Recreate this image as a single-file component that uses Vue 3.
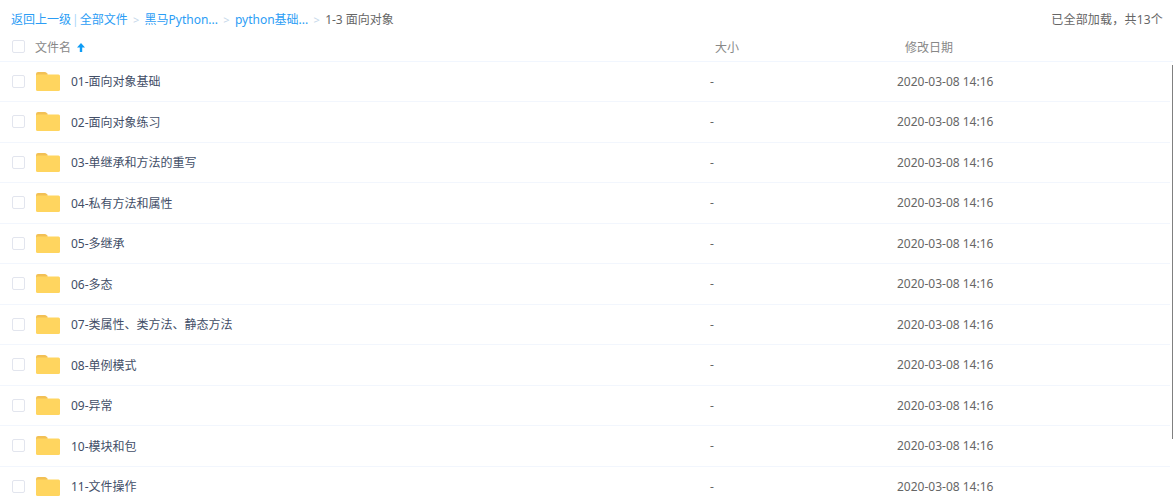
<script setup>
// 网盘文件列表：面包屑 + 表头 + 文件夹行
const names = [
  '01-面向对象基础',
  '02-面向对象练习',
  '03-单继承和方法的重写',
  '04-私有方法和属性',
  '05-多继承',
  '06-多态',
  '07-类属性、类方法、静态方法',
  '08-单例模式',
  '09-异常',
  '10-模块和包',
  '11-文件操作'
]
</script>

<template>
  <div class="page">
    <!-- 面包屑 -->
    <div class="crumbs">
      <div class="path">
        <a>返回上一级</a>
        <span class="bar">|</span>
        <a>全部文件</a>
        <span class="sep">&gt;</span>
        <a>黑马Python...</a>
        <span class="sep">&gt;</span>
        <a>python基础...</a>
        <span class="sep">&gt;</span>
        <span>1-3 面向对象</span>
      </div>
      <div class="total">已全部加载，共13个</div>
    </div>

    <!-- 表头 -->
    <div class="head">
      <span class="check"></span>
      <span class="head-name">文件名
        <svg class="arrow" width="8" height="9" viewBox="0 0 8 9">
          <path d="M4 0 L8 4.5 L5.2 4.5 L5.2 9 L2.8 9 L2.8 4.5 L0 4.5 Z" fill="#0e9cf5" />
        </svg>
      </span>
      <span class="head-size">大小</span>
      <span class="head-date">修改日期</span>
    </div>

    <!-- 文件行 -->
    <div class="row" v-for="n in names" :key="n">
      <span class="check"></span>
      <svg class="folder" width="24" height="19" viewBox="0 0 24 19">
        <path d="M0 2 Q0 0 2 0 L8.5 0 Q10 0 11 1.2 L12 2.5 L0 6 Z" fill="#f2c055" />
        <path d="M0 3.8 Q0 2.5 1.5 2.5 L22.5 2.5 Q24 2.5 24 4 L24 17.5 Q24 19 22.5 19 L1.5 19 Q0 19 0 17.5 Z" fill="#ffd55f" />
      </svg>
      <span class="name">{{ n }}</span>
      <span class="size">-</span>
      <span class="date">2020-03-08 14:16</span>
    </div>

    <!-- 滚动条 -->
    <div class="thumb"></div>
  </div>
</template>

<style>
html, body { background: #fff; overflow: hidden; }
</style>

<style scoped>
.page {
  position: relative;
  width: 1173px;
  height: 503px;
  overflow: hidden;
  font-family: "Noto Sans", "Noto Sans CJK SC", sans-serif;
  font-size: 12px;
  color: #666;
  background: #fff;
}
.crumbs {
  display: flex;
  justify-content: space-between;
  align-items: center;
  height: 38px;
  padding: 0 10px 0 11px;
}
.path { display: flex; align-items: center; }
.path a { color: #2b9df5; }
.bar { color: #a9d6fa; margin: 0 1px; }
.sep { color: #c5d8ea; margin: 0 5.3px; font-size: 11px; }
.total { letter-spacing: 0.2px; }
.head {
  display: flex;
  align-items: center;
  box-sizing: border-box;
  height: 23.5px;
  padding: 0 0 5px 12px;
  color: #888;
  border-bottom: 1px solid #f1f6fe;
}
.check {
  flex: none;
  width: 11px;
  height: 11px;
  border: 1px solid #e2e5ee;
  border-radius: 2px;
  background: #fff;
}
.head-name { width: 680px; margin-left: 10px; }
.arrow { margin-left: 3px; }
.head-size { width: 190px; }
.row {
  display: flex;
  align-items: center;
  height: 40.5px;
  box-sizing: border-box;
  width: 1170px;
  padding-left: 12px;
  color: #424e67;
  border-bottom: 1px solid #f2f6fd;
}
.folder { flex: none; margin-left: 11px; }
.name { width: 639px; margin-left: 11px; }
.size { width: 187px; color: #666; }
.date { color: #666; }
.thumb {
  position: absolute;
  top: 65px;
  right: 0;
  width: 1px;
  height: 374px;
  background: #808080;
}
</style>
